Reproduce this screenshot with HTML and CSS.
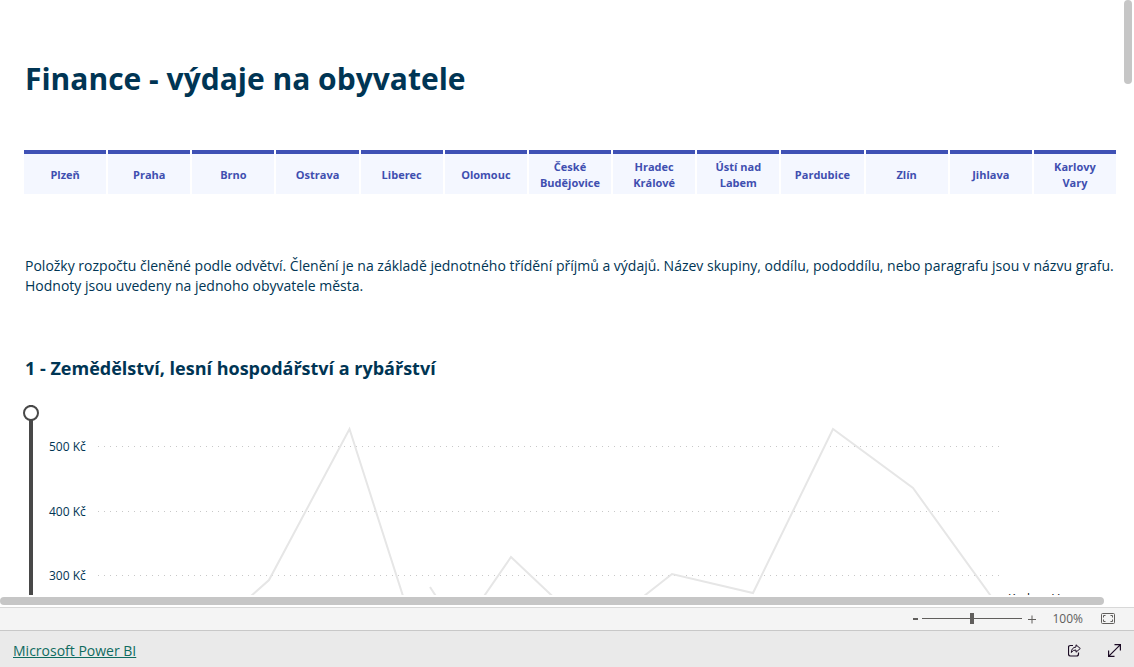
FILE: index.html
```html
<!DOCTYPE html>
<html lang="cs">
<head>
<meta charset="utf-8">
<title>Finance - výdaje na obyvatele</title>
<link rel="stylesheet" href="styles.css">
</head>
<body>
<div class="viewer">
  <main class="report">
    <div class="page">
      <h1 class="title">Finance - výdaje na obyvatele</h1>
      <nav class="cities" aria-label="Města">
        <button class="city" type="button">Plzeň</button>
        <button class="city" type="button">Praha</button>
        <button class="city" type="button">Brno</button>
        <button class="city" type="button">Ostrava</button>
        <button class="city" type="button">Liberec</button>
        <button class="city" type="button">Olomouc</button>
        <button class="city" type="button">České Budějovice</button>
        <button class="city" type="button">Hradec Králové</button>
        <button class="city" type="button">Ústí nad Labem</button>
        <button class="city" type="button">Pardubice</button>
        <button class="city" type="button">Zlín</button>
        <button class="city" type="button">Jihlava</button>
        <button class="city" type="button">Karlovy Vary</button>
      </nav>
      <p class="intro">Položky rozpočtu členěné podle odvětví. Členění je na základě jednotného třídění příjmů a výdajů. Název skupiny, oddílu, pododdílu, nebo paragrafu jsou v názvu grafu.<br>Hodnoty jsou uvedeny na jednoho obyvatele města.</p>
      <h2 class="subtitle">1 - Zemědělství, lesní hospodářství a rybářství</h2>
      <div class="chart">
        <input class="range" type="range" min="0" max="100" value="100" aria-label="Rozsah osy Y">
        <svg class="plot" viewBox="0 0 1077 300" preserveAspectRatio="xMinYMin slice" role="img" aria-label="Graf výdajů na obyvatele">
          <g class="grid">
            <path d="M59 41.500H962"/>
            <path d="M59 106.500H962"/>
            <path d="M59 170.500H962"/>
          </g>
          <g class="axis">
            <text x="10" y="46">500 Kč</text>
            <text x="10" y="111">400 Kč</text>
            <text x="10" y="175">300 Kč</text>
          </g>
          <g class="series">
            <path d="M202 200L230 175L310.500 24L372 216"/>
            <path d="M391 182L404 202"/>
            <path d="M430 213L472 152L526 203"/>
            <path d="M586 206L633 169L714 188L794 24L874 83L962 205"/>
          </g>
          <text class="label" x="969" y="198">Karlovy Vary</text>
        </svg>
      </div>
    </div>
  </main>
  <div class="bar-x"></div>
  <div class="bar-y"></div>
</div>
<div class="zoombar">
  <button class="step" type="button" aria-label="Oddálit"><svg width="5" height="12" viewBox="0 0 5 12"><path d="M0 6H5" stroke="#605e5c" stroke-width="2"/></svg></button>
  <input class="zoom" type="range" min="0" max="100" value="50" aria-label="Lupa">
  <button class="step plus" type="button" aria-label="Přiblížit"><svg width="8" height="12" viewBox="0 0 8 12"><path d="M0 6.500H8M4 2.500V10.500" stroke="#605e5c"/></svg></button>
  <span class="percent">100%</span>
  <button class="step fit" type="button" aria-label="Přizpůsobit stránce"><svg width="14" height="11" viewBox="0 0 14 11" fill="none" stroke="#605e5c"><rect x=".5" y=".5" width="13" height="10" rx="1"/><path d="M2.500 4.500V2.500H4.500M9.500 2.500H11.500V4.500M11.500 6.500V8.500H9.500M4.500 8.500H2.500V6.500"/></svg></button>
</div>
<footer class="footer">
  <a class="brand" href="#">Microsoft Power BI</a>
  <button class="tool" type="button" aria-label="Sdílet"><svg width="13" height="13" viewBox="0 0 13 13" fill="none" stroke="#1b0b24" stroke-linejoin="round"><path d="M5 1.500H2.500Q.5 1.500 .5 3.500V10Q.5 12 2.500 12H8.500Q10.500 12 10.500 10V8.500" stroke-width="1.200"/><path d="M8 .8L12.300 4.500L8 8.200V6Q5 5.800 3.300 8.500Q3.500 3.500 8 3Z"/></svg></button>
  <button class="tool" type="button" aria-label="Celá obrazovka"><svg width="13" height="13" viewBox="0 0 13 13" fill="none" stroke="#1b0b24" stroke-width="1.200"><path d="M.6 12.400L12.400 .6M6.500 .6H12.400V6.500M.6 6.500V12.400H6.500"/></svg></button>
</footer>
</body>
</html>
```
FILE: styles.css
```css
* { box-sizing: border-box; }
body {
  margin: 0;
  height: 100vh;
  display: flex;
  flex-direction: column;
  background: #fff;
  color: #003554;
  font-family: "Segoe UI", "Open Sans", "Noto Sans", sans-serif;
}
button { border: 0; padding: 0; background: none; font: inherit; color: inherit; }
.viewer { flex: 1; min-height: 0; position: relative; padding-bottom: 12px; }
.report { height: 100%; overflow: hidden; }
.page { padding: 56px 18px 0 24px; }
.title { margin: 0 1px; font-size: 30px; line-height: 46px; font-weight: 700; }
.cities {
  margin-top: 48px;
  display: grid;
  grid-template-columns: repeat(13, 1fr);
  gap: 2px;
}
.city {
  min-width: 0;
  height: 44px;
  padding: 2px 8px 0;
  border-top: 4px solid #3f51b5;
  background: #f4f7ff;
  color: #3f4fb0;
  font-size: 11px;
  line-height: 16px;
  font-weight: 700;
}
.intro { margin: 62px 0 0; padding-left: 1px; font-size: 14px; line-height: 20px; white-space: nowrap; }
.subtitle { margin: 60px 1px 0; font-size: 18px; line-height: 24px; font-weight: 700; }
.chart { margin-top: 25px; display: flex; }
.range {
  appearance: none;
  writing-mode: vertical-lr;
  direction: rtl;
  margin: 0 0 0 -1px;
  width: 16px;
  height: 300px;
  flex: none;
  background: linear-gradient(#484848, #484848) center / 4px 100% no-repeat;
}
.range::-webkit-slider-thumb {
  appearance: none;
  width: 16px;
  height: 16px;
  border: 2px solid #484848;
  border-radius: 50%;
  background: #fff;
}
.plot { flex: 1; min-width: 0; height: 300px; }
.grid path { stroke: #c8c8c8; stroke-dasharray: 1 5; }
.series path { fill: none; stroke: #e6e6e6; stroke-width: 2; }
.axis text { font-size: 12px; fill: #003554; }
.label { font-size: 12px; fill: #111; }
.bar-x, .bar-y { position: absolute; border-radius: 4px; background: #c6c6c6; }
.bar-x { left: 0; right: 30px; bottom: 2px; height: 8px; }
.bar-y { top: 0; right: 2px; width: 8px; height: 84px; }
.zoombar {
  height: 23px;
  flex: none;
  display: flex;
  align-items: center;
  justify-content: flex-end;
  padding: 0 19px 1px 0;
  border-top: 1px solid #d8d8d8;
  background: #f4f4f4;
  color: #605e5c;
  font-size: 12px;
}
.step { display: flex; }
.zoom {
  appearance: none;
  width: 100px;
  height: 12px;
  margin: 0 6px 0 4px;
  background: linear-gradient(#605e5c, #605e5c) center / 100% 1px no-repeat;
}
.zoom::-webkit-slider-thumb { appearance: none; width: 4px; height: 11px; background: #605e5c; }
.percent { margin: 0 18px 0 16px; }
.footer {
  height: 37px;
  flex: none;
  display: flex;
  align-items: center;
  gap: 27px;
  padding: 3px 13px 0 13px;
  border-top: 1px solid #c8c8c8;
  background: #eaeaea;
}
.brand { margin-right: auto; color: #0f6b60; font-size: 14px; line-height: 20px; }
.tool { display: flex; }
```
